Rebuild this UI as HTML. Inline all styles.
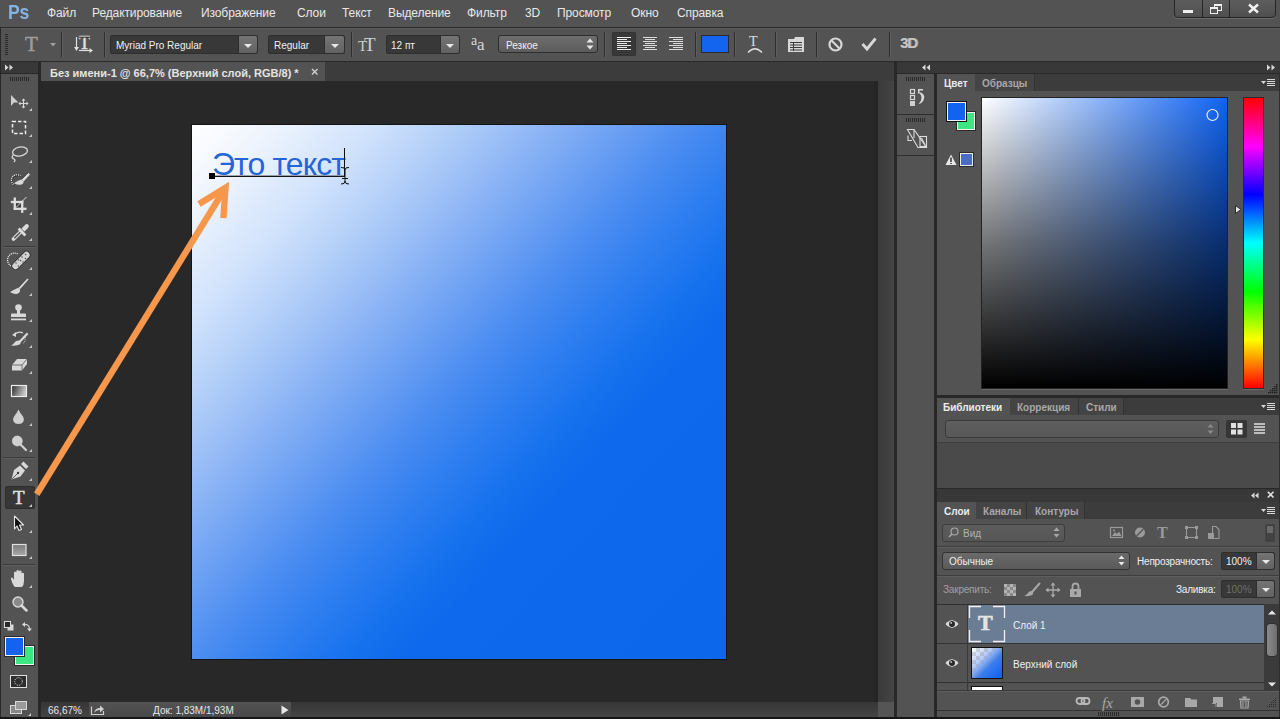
<!DOCTYPE html>
<html><head><meta charset="utf-8">
<style>
*{margin:0;padding:0;box-sizing:border-box}
html,body{width:1280px;height:719px;overflow:hidden;background:#535353;font-family:"Liberation Sans",sans-serif;position:relative}
.a{position:absolute}
.t{position:absolute;white-space:nowrap;color:#e6e6e6;font-size:12px;line-height:14px}
.m{top:6px;font-size:12px;color:#e8e8e8;letter-spacing:-0.1px}
.sep{position:absolute;top:32px;width:1px;height:25px;background:#2e2e2e;box-shadow:1px 0 0 #5e5e5e}
.dd{position:absolute;background:#383838;border:1px solid #2e2e2e;border-radius:2px}
.ddb{position:absolute;top:0;bottom:0;right:0;background:linear-gradient(#747474,#626262);border-left:1px solid #2e2e2e;border-radius:0 2px 2px 0}
.ddb:after{content:"";position:absolute;left:50%;top:50%;margin:-1px 0 0 -4px;border-left:4px solid transparent;border-right:4px solid transparent;border-top:4px solid #e8e8e8}
.tab{position:absolute;font-size:10px;font-weight:bold;line-height:12px;white-space:nowrap}
svg{position:absolute;overflow:visible}
</style></head><body>
<!-- ===== MENU BAR ===== -->
<div class="a" style="left:0;top:0;width:1280px;height:27px;background:#535353"></div>
<div class="a" style="left:0;top:27px;width:1280px;height:1px;background:#2a2a2a"></div>
<div class="t" style="left:8px;top:1px;font-size:21px;line-height:21px;font-weight:bold;color:#86b2e4;letter-spacing:-0.3px;transform:scaleX(.84);transform-origin:0 0">Ps</div>
<div class="t m" style="left:47px">Файл</div>
<div class="t m" style="left:92px">Редактирование</div>
<div class="t m" style="left:201px">Изображение</div>
<div class="t m" style="left:297px">Слои</div>
<div class="t m" style="left:342px">Текст</div>
<div class="t m" style="left:388px">Выделение</div>
<div class="t m" style="left:467px">Фильтр</div>
<div class="t m" style="left:525px">3D</div>
<div class="t m" style="left:557px">Просмотр</div>
<div class="t m" style="left:631px">Окно</div>
<div class="t m" style="left:677px">Справка</div>
<!-- window buttons -->
<div class="a" style="left:1174px;top:-2px;width:102px;height:20px;border:1px solid #262626;border-radius:0 0 4px 4px;background:linear-gradient(#5e5e5e,#4f4f4f);box-shadow:0 1px 0 #6a6a6a"></div>
<div class="a" style="left:1202px;top:0;width:1px;height:17px;background:#262626"></div>
<div class="a" style="left:1229px;top:0;width:1px;height:17px;background:#262626"></div>
<div class="a" style="left:1183px;top:10px;width:10px;height:3px;background:#f0f0f0"></div>
<div class="a" style="left:1214px;top:4px;width:8px;height:7px;border:1.5px solid #f0f0f0;border-top-width:2px"></div>
<div class="a" style="left:1210px;top:7px;width:8px;height:7px;border:1.5px solid #f0f0f0;border-top-width:2px;background:#575757"></div>
<svg style="left:1248px;top:4px" width="11" height="9"><path d="M1 0.5L10 8.5M10 0.5L1 8.5" stroke="#f0f0f0" stroke-width="2.4"/></svg>

<!-- ===== OPTIONS BAR ===== -->
<div class="a" style="left:0;top:28px;width:1280px;height:33px;background:#535353;border-top:1px solid #5c5c5c"></div>
<div class="a" style="left:0;top:61px;width:1280px;height:1px;background:#2a2a2a"></div>
<div class="a" style="left:0;top:28px;width:1px;height:33px;background:#2a2a2a"></div>

<!-- grip -->
<svg style="left:5px;top:34px" width="4" height="21"><g stroke="#2a2a2a" stroke-width="1"><path d="M0 0.5H3M0 2.5H3M0 4.5H3M0 6.5H3M0 8.5H3M0 10.5H3M0 12.5H3M0 14.5H3M0 16.5H3M0 18.5H3M0 20.5H3"/></g></svg>
<!-- T tool preset -->
<div class="t" style="left:25px;top:34px;font-family:'Liberation Serif',serif;font-size:21px;line-height:21px;color:#9c9c9c;-webkit-text-stroke:0.5px #9c9c9c">T</div>
<svg style="left:50px;top:43px" width="6" height="4"><path d="M0 0H6L3 3.5Z" fill="#a0a0a0"/></svg>
<div class="sep" style="left:61px"></div>
<!-- orientation icon -->
<div class="t" style="left:79px;top:34px;font-family:'Liberation Serif',serif;font-size:18px;line-height:18px;color:#e0e0e0;-webkit-text-stroke:0.5px #e0e0e0">T</div>
<svg style="left:74px;top:36px" width="20" height="17"><path d="M2.5 1V13" stroke="#e0e0e0" stroke-width="1.2"/><path d="M0 11L2.5 15L5 11Z" fill="#e0e0e0"/><path d="M5 14.5H17" stroke="#e0e0e0" stroke-width="1.2"/><path d="M15.5 12L19 14.5L15.5 17Z" fill="#e0e0e0"/><path d="M5 1.2H17" stroke="#2a2a2a" stroke-width="1"/></svg>
<div class="sep" style="left:104px"></div>
<!-- font family dropdown -->
<div class="dd" style="left:110px;top:35px;width:148px;height:19px"><div class="ddb" style="width:19px"></div></div>
<div class="t" style="left:116px;top:40px;font-size:10px;line-height:12px;color:#f0f0f0">Myriad Pro Regular</div>
<div class="dd" style="left:268px;top:35px;width:77px;height:19px"><div class="ddb" style="width:20px"></div></div>
<div class="t" style="left:274px;top:40px;font-size:10px;line-height:12px;color:#f0f0f0">Regular</div>
<div class="sep" style="left:351px"></div>
<!-- size icon -->
<div class="t" style="left:358px;top:39px;font-family:'Liberation Serif',serif;font-size:15px;line-height:15px;color:#cfcfcf">T</div>
<div class="t" style="left:364px;top:35px;font-family:'Liberation Serif',serif;font-size:19px;line-height:19px;color:#cfcfcf">T</div>
<div class="dd" style="left:386px;top:35px;width:74px;height:19px"><div class="ddb" style="width:19px"></div></div>
<div class="t" style="left:391px;top:40px;font-size:10px;line-height:12px;color:#f0f0f0">12 пт</div>
<!-- aa icon -->
<div class="t" style="left:471px;top:34px;font-family:'Liberation Serif',serif;font-size:14px;line-height:14px;color:#d8d8d8">a</div>
<div class="t" style="left:477px;top:37px;font-family:'Liberation Serif',serif;font-size:17px;line-height:16px;color:#d8d8d8">a</div>
<!-- antialias dropdown -->
<div class="a" style="left:498px;top:35px;width:100px;height:18px;border:1px solid #2e2e2e;border-radius:3px;background:linear-gradient(#6e6e6e,#5c5c5c)"></div>
<div class="t" style="left:506px;top:40px;font-size:10px;line-height:12px;color:#f0f0f0">Резкое</div>
<svg style="left:586px;top:38px" width="8" height="12"><path d="M0.5 4.5L4 0.5L7.5 4.5ZM0.5 7.5L4 11.5L7.5 7.5Z" fill="#e8e8e8"/></svg>
<div class="sep" style="left:604px"></div>
<!-- align buttons -->
<div class="a" style="left:612px;top:32px;width:24px;height:24px;background:#383838;border-radius:2px;box-shadow:inset 0 0 0 1px #333"></div>
<svg style="left:617px;top:37px" width="15" height="14"><g stroke="#ececec" stroke-width="1"><path d="M0 0.5H14M0 2.5H10M0 4.5H14M0 6.5H10M0 8.5H14M0 10.5H10M0 12.5H14"/></g></svg>
<svg style="left:643px;top:37px" width="15" height="14"><g stroke="#dcdcdc" stroke-width="1"><path d="M0 0.5H14M2 2.5H12M0 4.5H14M2 6.5H12M0 8.5H14M2 10.5H12M0 12.5H14"/></g></svg>
<svg style="left:669px;top:37px" width="15" height="14"><g stroke="#dcdcdc" stroke-width="1"><path d="M0 0.5H14M4 2.5H14M0 4.5H14M4 6.5H14M0 8.5H14M4 10.5H14M0 12.5H14"/></g></svg>
<div class="sep" style="left:695px"></div>
<div class="a" style="left:701px;top:35px;width:28px;height:18px;background:#1464f0;border:1px solid #2a2a2a"></div>
<div class="sep" style="left:734px"></div>
<!-- warp -->
<div class="t" style="left:749px;top:35px;font-family:'Liberation Serif',serif;font-size:14px;line-height:14px;color:#dedede">T</div>
<svg style="left:747px;top:44px" width="16" height="10"><path d="M1 8.5Q8 1 15 8.5" stroke="#dedede" stroke-width="1.4" fill="none"/></svg>
<div class="sep" style="left:775px"></div>
<!-- panels icon -->
<svg style="left:788px;top:36px" width="17" height="17"><path d="M0 3H6L7 1H16V16H0Z" fill="#d8d8d8"/><g stroke="#3a3a3a" stroke-width="1"><path d="M2 6.5H14M2 9H14M2 11.5H14M2 14H14"/><path d="M5.5 6V15"/></g></svg>
<div class="sep" style="left:816px"></div>
<svg style="left:828px;top:37px" width="15" height="15"><circle cx="7.5" cy="7.5" r="6" stroke="#d8d8d8" stroke-width="2.2" fill="none"/><path d="M3.5 3.5L11.5 11.5" stroke="#d8d8d8" stroke-width="2.2"/></svg>
<svg style="left:861px;top:37px" width="16" height="14"><path d="M1.5 7L6 12L14.5 1.5" stroke="#d8d8d8" stroke-width="2.8" fill="none"/></svg>
<div class="sep" style="left:889px"></div>
<div class="t" style="left:900px;top:35px;font-size:15px;line-height:16px;font-weight:bold;color:#c4c4c4;letter-spacing:-1.2px;text-shadow:1px 0 0 #8a8a8a">3D</div>

<!-- ===== ROW BELOW OPTIONS / DOC AREA ===== -->
<div class="a" style="left:0;top:62px;width:1280px;height:657px;background:#282828"></div>
<div class="a" style="left:41px;top:62px;width:853px;height:19px;background:#3c3c3c"></div>
<div class="a" style="left:41px;top:62px;width:284px;height:19px;background:#535353"></div>
<div class="tab" style="left:50px;top:67px;font-size:11px;color:#e4e4e4">Без имени-1 @ 66,7% (Верхний слой, RGB/8) *</div>
<svg style="left:311px;top:68px" width="8" height="8"><path d="M1 1L6.5 6.5M6.5 1L1 6.5" stroke="#d0d0d0" stroke-width="1.4"/></svg>
<!-- pasteboard -->
<div class="a" style="left:41px;top:81px;width:837px;height:621px;background:#282828"></div>
<div class="a" style="left:874px;top:81px;width:4px;height:621px;background:#252525"></div>
<div class="a" style="left:878px;top:81px;width:16px;height:621px;background:linear-gradient(90deg,#3a3a3a,#444)"></div>
<!-- status bar -->
<div class="a" style="left:41px;top:702px;width:837px;height:15px;background:linear-gradient(#363636,#444)"></div>
<div class="a" style="left:89px;top:702px;width:202px;height:15px;background:linear-gradient(#535353,#484848)"></div>
<div class="a" style="left:878px;top:702px;width:16px;height:15px;background:#555"></div>
<div class="t" style="left:48px;top:705px;font-size:10px;line-height:11px;color:#e8e8e8">66,67%</div>
<svg style="left:90px;top:703px" width="16" height="13"><path d="M1.5 3.5V11.5H13.5V8" stroke="#d0d0d0" stroke-width="1.2" fill="none"/><path d="M4 10Q5 5 10 5V2.5L14 6L10 9.5V7Q6 7 4 10Z" fill="#d0d0d0"/></svg>
<div class="t" style="left:153px;top:705px;font-size:10px;line-height:11px;color:#e8e8e8">Док: 1,83M/1,93M</div>
<svg style="left:281px;top:705px" width="8" height="10"><path d="M0.5 0.5L7.5 5L0.5 9.5Z" fill="#e8e8e8"/></svg>
<div class="a" style="left:0;top:717px;width:1280px;height:2px;background:#161616"></div>
<!-- canvas -->
<div class="a" style="left:191px;top:124px;width:536px;height:536px;background:#141414"></div>
<div class="a" style="left:192px;top:125px;width:534px;height:534px;background:linear-gradient(133deg,#ffffff 0%,#eef4fd 8%,#d0e2fc 18%,#b0cdf8 26%,#8cb4f5 34.5%,#6a9ff3 42%,#4a8cf1 49%,#2e7ef0 56%,#1772ee 63%,#0e69ec 69%,#0c67eb 100%)"></div>
<!-- text on canvas -->
<div class="t" style="left:212px;top:146px;font-size:32px;line-height:36px;color:#2565d8;letter-spacing:-0.9px">Это текст</div>
<div class="a" style="left:215px;top:176px;width:130px;height:1px;background:#141414"></div><div class="a" style="left:215px;top:175px;width:130px;height:1px;background:rgba(20,20,20,.35)"></div>
<div class="a" style="left:209px;top:173px;width:6px;height:6px;background:#000"></div>
<div class="a" style="left:344px;top:148px;width:1px;height:28px;background:#111"></div>
<svg style="left:340px;top:166px" width="10" height="20"><g stroke="#111" stroke-width="1" fill="none"><path d="M1 1.5Q5 1 5 4Q5 1 9 1.5"/><path d="M5 4V15"/><path d="M2 12.5H8"/><path d="M1 18Q5 18.5 5 15Q5 18.5 9 18"/></g></svg>


<!-- ===== TOOLBOX ===== -->
<div class="a" style="left:1px;top:62px;width:37px;height:11px;background:#383838"></div>
<svg style="left:5px;top:64px" width="10" height="7"><path d="M0 0.5L3.5 3.5L0 6.5ZM4.5 0.5L8 3.5L4.5 6.5Z" fill="#d8d8d8"/></svg>
<div class="a" style="left:1px;top:74px;width:37px;height:643px;background:#535353"></div>
<svg style="left:0;top:0" width="40" height="719">
<g stroke="#2a2a2a" stroke-width="1"><path d="M10.5 77V81M12.5 77V81M14.5 77V81M16.5 77V81M18.5 77V81M20.5 77V81M22.5 77V81M24.5 77V81M26.5 77V81M28.5 77V81"/></g>
<g fill="#c8c8c8">
<path d="M29 111L32 108V111Z"/><path d="M29 137L32 134V137Z"/><path d="M29 163L32 160V163Z"/><path d="M29 189L32 186V189Z"/><path d="M29 215L32 212V215Z"/><path d="M29 241L32 238V241Z"/>
<path d="M29 270L32 267V270Z"/><path d="M29 296L32 293V296Z"/><path d="M29 322L32 319V322Z"/><path d="M29 348L32 345V348Z"/><path d="M29 374L32 371V374Z"/><path d="M29 400L32 397V400Z"/><path d="M29 426L32 423V426Z"/><path d="M29 452L32 449V452Z"/>
<path d="M29 481L32 478V481Z"/><path d="M29 507L32 504V507Z"/><path d="M29 533L32 530V533Z"/><path d="M29 559L32 556V559Z"/><path d="M29 588L32 585V588Z"/>
<path d="M28 716L31 713V716Z"/>
</g>
<!-- separators -->
<g stroke="#3a3a3a" stroke-width="1"><path d="M3 246.5H35M3 457.5H35M3 564.5H35"/></g>
<g stroke="#5e5e5e" stroke-width="1"><path d="M3 247.5H35M3 458.5H35M3 565.5H35"/></g>
<!-- move -->
<path d="M11 95L18.5 102.5H14L11 106Z" fill="#cfcfcf"/>
<g stroke="#d8d8d8" stroke-width="1.2" fill="none"><path d="M23.5 99V108M19 103.5H28"/></g>
<g fill="#d8d8d8"><path d="M21.5 100.5L23.5 98.5L25.5 100.5ZM21.5 106.5L23.5 108.5L25.5 106.5ZM20.5 101.5L18.5 103.5L20.5 105.5ZM26.5 101.5L28.5 103.5L26.5 105.5Z"/></g>
<!-- marquee -->
<rect x="12.5" y="121.5" width="13" height="12" fill="none" stroke="#ececec" stroke-width="1.5" stroke-dasharray="3.5 2"/>
<!-- lasso -->
<ellipse cx="20" cy="151.5" rx="7.5" ry="4.5" transform="rotate(-12 20 151.5)" fill="none" stroke="#d8d8d8" stroke-width="1.3"/>
<path d="M13 155Q11 158 14 159Q16 160 14 162" fill="none" stroke="#d8d8d8" stroke-width="1.3"/>
<!-- quick selection -->
<path d="M13.5 184.5A5.5 5.5 0 1 1 20.5 176" fill="none" stroke="#1e1e1e" stroke-width="1.6" stroke-dasharray="1.2 0.8" transform="translate(0.6 0.6)"/>
<path d="M13.5 184.5A5.5 5.5 0 1 1 20.5 176" fill="none" stroke="#f0f0f0" stroke-width="1.2" stroke-dasharray="1.1 0.9"/>
<path d="M28 172.8L30 174.6L23.6 181.4L21.4 179.4Z" fill="#dcdcdc"/>
<path d="M28 172.8L21.4 179.4" stroke="#1e1e1e" stroke-width="0.8"/>
<path d="M21.4 179.4Q17.5 180.5 14 183.3Q18 185.5 21.5 184.6Q24 183.5 23.6 181.4Z" fill="#d8d8d8"/>
<!-- crop -->
<rect x="15.5" y="203" width="6" height="5.5" fill="#3c3c3c"/>
<g stroke="#dedede" stroke-width="2.3" fill="none"><path d="M10.8 202H23.3"/><path d="M14.8 197.5V210"/><path d="M13.7 208.8H26.5"/><path d="M22.2 200.8V212.8"/></g>
<path d="M16 207.5L26.5 197" stroke="#e8e8e8" stroke-width="0.9"/>
<!-- eyedropper -->
<path d="M13.5 239L21 231.5" stroke="#dcdcdc" stroke-width="3.8" stroke-linecap="round"/>
<path d="M14.3 238.2L20.5 232" stroke="#4a4a4a" stroke-width="1.3"/>
<path d="M18.6 228.6L25.4 235.4" stroke="#dcdcdc" stroke-width="2.8"/>
<path d="M21.5 228.5L25 225Q26.8 223.3 28.3 224.8Q29.8 226.3 28 228L24.5 231.5Z" fill="#dcdcdc"/>
<!-- healing -->
<path d="M11 266A6 6 0 0 1 18 254" fill="none" stroke="#f0f0f0" stroke-width="1.2" stroke-dasharray="1.1 0.9"/>
<path d="M15.5 266L26.5 255" stroke="#2a2a2a" stroke-width="8" stroke-linecap="round"/>
<path d="M15.5 266L26.5 255" stroke="#d2d2d2" stroke-width="6.4" stroke-linecap="round"/>
<g fill="#5a5a5a"><circle cx="16" cy="263" r="0.8"/><circle cx="18.5" cy="266" r="0.8"/><circle cx="20.5" cy="260.5" r="0.8"/><circle cx="23" cy="262" r="0.8"/><circle cx="22" cy="257" r="0.8"/><circle cx="25.5" cy="258.5" r="0.8"/><circle cx="25.5" cy="254.5" r="0.8"/><circle cx="18.5" cy="260" r="0.8"/></g>
<!-- brush -->
<path d="M27 278.3L28.6 279.6L20 289.3L18.2 287.7Z" fill="#d8d8d8"/>
<path d="M27 278.3L18.2 287.7" stroke="#1e1e1e" stroke-width="0.7"/>
<path d="M18.2 287.7Q14 289.5 10 292Q14 294.5 17.5 293.7Q20.5 292.5 20 289.3Z" fill="#d8d8d8"/>
<!-- stamp -->
<circle cx="18.5" cy="307.5" r="3.3" fill="#d8d8d8"/>
<path d="M17 309H20V313.5H25Q26 313.5 26 314.5V317H11V314.5Q11 313.5 12 313.5H17Z" fill="#d8d8d8"/>
<rect x="11" y="318.5" width="15" height="1.8" fill="#d8d8d8"/>
<!-- history brush -->
<path d="M27 334L19.5 342" stroke="#d8d8d8" stroke-width="2.2" stroke-linecap="round"/>
<path d="M20 340.5Q21.5 343 19.5 344.5Q17 346 11 345.5Q14 344 14.5 342.5Q16 340 20 340.5Z" fill="#d8d8d8"/>
<path d="M15 334Q19 331 23 333" fill="none" stroke="#d8d8d8" stroke-width="1.3"/>
<path d="M12 335L16 332V337Z" fill="#d8d8d8"/>
<path d="M25 337Q26 342 22 344" fill="none" stroke="#e0e0e0" stroke-width="1" stroke-dasharray="1 1"/>
<!-- eraser -->
<path d="M12 365L17 359H27V364L22 370.5H12Z" fill="#d8d8d8"/>
<path d="M12 365H22L27 359M22 365V370.5" fill="none" stroke="#535353" stroke-width="0.8"/>
<!-- gradient -->
<rect x="11.5" y="385.5" width="15" height="11" fill="url(#gtool)" stroke="#ececec" stroke-width="1.2"/>
<defs><linearGradient id="gtool" x1="0" x2="1" y1="0" y2="0.3"><stop offset="0" stop-color="#2a2a2a"/><stop offset="1" stop-color="#c8c8c8"/></linearGradient></defs>
<!-- blur drop -->
<path d="M18.5 409.5Q20 413 23 416.5Q24.5 419 23.5 421.5Q22 424 18.5 424Q15 424 13.5 421.5Q12.5 419 14 416.5Q17 413 18.5 409.5Z" fill="#d0d0d0"/>
<!-- dodge -->
<circle cx="17.3" cy="441" r="5" fill="#d0d0d0" stroke="#e0e0e0" stroke-width="0.6"/>
<path d="M20.5 444.5L26 450" stroke="#d0d0d0" stroke-width="2.2" stroke-linecap="round"/>
<!-- pen -->
<path d="M11.5 479.5L14 470L20 465.5L25 470.5L20.5 476.5Z" fill="#d8d8d8"/>
<path d="M21 464L23.5 461.5L28.5 466.5L26 469Z" fill="#d8d8d8"/>
<path d="M12 479L17.5 473.5" stroke="#535353" stroke-width="0.9"/><circle cx="18" cy="473" r="1.2" fill="#3a3a3a"/>
</g>
</svg>
<!-- type tool selected -->
<div class="a" style="left:5px;top:486px;width:30px;height:23px;background:#363636;border-radius:3px;box-shadow:inset 0 0 0 1px #2e2e2e"></div>
<div class="t" style="left:13px;top:488px;font-family:'Liberation Serif',serif;font-size:19px;line-height:19px;color:#e0e0e0;-webkit-text-stroke:0.5px #e0e0e0">T</div>
<svg style="left:0;top:0" width="40" height="719">
<path d="M29 507L32 504V507Z" fill="#c8c8c8"/>
<!-- path selection -->
<path d="M14.5 516L23.5 525H19.5L21.5 529.5L19 530.5L17 526L14.5 529Z" fill="#111" stroke="#e8e8e8" stroke-width="1.1" stroke-linejoin="round"/>
<!-- rectangle -->
<rect x="12.5" y="544.5" width="13.5" height="11" fill="url(#rtool)" stroke="#e0e0e0" stroke-width="1.2"/>
<defs><linearGradient id="rtool" x1="0" x2="0" y1="0" y2="1"><stop offset="0" stop-color="#7a7a7a"/><stop offset="1" stop-color="#a8a8a8"/></linearGradient></defs>
<!-- hand -->
<path d="M14 586Q12 583 11 579Q10.5 577.5 12 577.5Q13 577.5 14 580V573Q14 571.5 15.2 571.5Q16.3 571.5 16.3 573V578V571.5Q16.3 570 17.6 570Q19 570 19 571.5V578V572Q19 570.6 20.3 570.6Q21.6 570.6 21.6 572V578V574Q21.6 572.8 22.8 572.8Q24 572.8 24 574V581Q24 585 22 587H15Z" fill="#d8d8d8"/>
<!-- zoom -->
<circle cx="18" cy="602" r="5" fill="#8a8a8a" stroke="#d8d8d8" stroke-width="1.4"/>
<path d="M21.5 605.5L26.5 610.5" stroke="#d8d8d8" stroke-width="2.5" stroke-linecap="round"/>
<!-- default colors -->
<rect x="7.5" y="624.5" width="6" height="6" fill="#d8d8d8"/>
<rect x="4.5" y="621.5" width="6" height="6" fill="#2a2a2a" stroke="#d8d8d8" stroke-width="1"/>
<!-- swap -->
<path d="M23.5 624.5Q29.5 624 29.5 629" fill="none" stroke="#d8d8d8" stroke-width="1.2"/>
<path d="M22 624.5L25 622V627Z" fill="#d8d8d8"/><path d="M27 628.5H32L29.5 631.5Z" fill="#d8d8d8"/>
</svg>
<!-- fg/bg -->
<div class="a" style="left:15px;top:646px;width:19px;height:19px;background:#3ee682;border:1px solid #f4f4f4;box-shadow:0 0 0 1px #2a2a2a"></div>
<div class="a" style="left:5px;top:637px;width:19px;height:19px;background:#1462f0;border:1px solid #f4f4f4;box-shadow:0 0 0 1px #2a2a2a"></div>
<!-- quick mask -->
<div class="a" style="left:10px;top:675px;width:17px;height:13px;border:1px solid #e0e0e0;background:#2e2e2e"></div>
<svg style="left:13px;top:676px" width="11" height="11"><circle cx="5.5" cy="5.5" r="3.8" fill="none" stroke="#e8e8e8" stroke-width="1" stroke-dasharray="1 1.2"/></svg>
<!-- screen mode -->
<div class="a" style="left:10px;top:705px;width:12px;height:9px;border:1px solid #d8d8d8;background:#888"></div>
<div class="a" style="left:15px;top:701px;width:12px;height:9px;border:1px solid #d8d8d8;background:#9a9a9a"></div>

<!-- ===== RIGHT DOCK ===== -->
<div class="a" style="left:897px;top:62px;width:383px;height:11px;background:#383838"></div>
<svg style="left:922px;top:64px" width="10" height="7"><path d="M3.5 0.5L0 3.5L3.5 6.5ZM8 0.5L4.5 3.5L8 6.5Z" fill="#d8d8d8"/></svg>
<svg style="left:1267px;top:64px" width="10" height="7"><path d="M0 0.5L3.5 3.5L0 6.5ZM4.5 0.5L8 3.5L4.5 6.5Z" fill="#d8d8d8"/></svg>
<!-- icon column -->
<div class="a" style="left:897px;top:74px;width:37px;height:643px;background:#535353"></div>
<div class="a" style="left:897px;top:114px;width:37px;height:1px;background:#2e2e2e"></div>
<div class="a" style="left:897px;top:155px;width:37px;height:1px;background:#2e2e2e"></div>
<svg style="left:897px;top:74px" width="37" height="90">
<g stroke="#2a2a2a" stroke-width="1"><path d="M9.5 3V7M11.5 3V7M13.5 3V7M15.5 3V7M17.5 3V7M19.5 3V7M21.5 3V7M23.5 3V7M25.5 3V7M27.5 3V7"/><path d="M9.5 44V48M11.5 44V48M13.5 44V48M15.5 44V48M17.5 44V48M19.5 44V48M21.5 44V48M23.5 44V48M25.5 44V48M27.5 44V48"/></g>
<g fill="none" stroke="#d8d8d8" stroke-width="1.2"><rect x="13.5" y="15.5" width="4" height="4"/><rect x="13.5" y="21.5" width="4" height="4"/></g>
<rect x="13" y="27" width="5" height="5" fill="#cfcfcf"/>
<path d="M21 15H26V16.5H22.5V19.5H21Z" fill="#d8d8d8"/>
<path d="M22.5 18Q28.5 20 27 25Q25.5 29.5 21.5 30Q24.5 27 24.5 24Q24.5 20.5 22.5 19.5Z" fill="#d8d8d8"/>
<g fill="none" stroke="#dcdcdc" stroke-width="1.1"><path d="M10.5 55.5H17L29.5 73.5H21Z"/><path d="M11 61.5V66.5H15"/><path d="M17 55.5V64"/><rect x="23" y="62.5" width="6.5" height="10"/><path d="M24.5 64L28 71"/></g>
</svg>
<!-- ===== COLOR PANEL ===== -->
<div class="a" style="left:937px;top:74px;width:343px;height:17px;background:#3c3c3c"></div>
<div class="a" style="left:975px;top:74px;width:60px;height:17px;background:#444;border-right:1px solid #333"></div>
<div class="a" style="left:937px;top:74px;width:38px;height:17px;background:#535353"></div>
<div class="tab" style="left:944px;top:78px;color:#ececec">Цвет</div>
<div class="tab" style="left:982px;top:78px;color:#a8a8a8">Образцы</div>
<svg style="left:1261px;top:79px" width="15" height="8"><path d="M0 2H5L2.5 5Z" fill="#d8d8d8"/><g stroke="#d8d8d8" stroke-width="1"><path d="M6 0.5H14M6 2.5H14M6 4.5H14M6 6.5H14"/></g></svg>
<div class="a" style="left:937px;top:91px;width:342px;height:304px;background:#535353"></div>
<!-- fg/bg in panel -->
<div class="a" style="left:957px;top:112px;width:18px;height:18px;background:#3ee682;border:1px solid #f4f4f4;box-shadow:0 0 0 1px #2a2a2a"></div>
<div class="a" style="left:947px;top:102px;width:19px;height:19px;background:#1462f0;border:1.5px solid #f4f4f4;box-shadow:0 0 0 1px #111"></div>
<svg style="left:945px;top:154px" width="12" height="12"><path d="M6 0.5L11.5 11H0.5Z" fill="#e8e8e8"/><path d="M6 3.5V8M6 9V10" stroke="#333" stroke-width="1.5"/></svg>
<div class="a" style="left:960px;top:153px;width:13px;height:13px;background:#4a6cc4;border:1px solid #ececec;box-shadow:0 0 0 1px #2a2a2a"></div>
<!-- color field -->
<div class="a" style="left:981px;top:97px;width:247px;height:292px;background:#222"></div><div class="a" style="left:981px;top:389px;width:247px;height:1px;background:#6a6a6a"></div>
<div class="a" style="left:982px;top:98px;width:245px;height:290px;background:linear-gradient(to bottom,rgba(0,0,0,0) 0%,rgba(0,0,0,.54) 50%,#000 100%),linear-gradient(to right,#fff,#0f62f2)"></div>
<svg style="left:1205px;top:108px" width="15" height="15"><circle cx="7.5" cy="7" r="5.5" fill="none" stroke="#f0f0f0" stroke-width="1.2"/></svg>
<!-- hue bar -->
<div class="a" style="left:1243px;top:97px;width:21px;height:292px;background:#2a2a2a"></div><div class="a" style="left:1243px;top:389px;width:21px;height:1px;background:#6a6a6a"></div>
<div class="a" style="left:1244px;top:98px;width:19px;height:290px;background:linear-gradient(to bottom,#ff0000 0%,#ff00ff 16.7%,#0000ff 33.3%,#00ffff 50%,#00ff00 66.7%,#ffff00 83.3%,#ff0000 100%)"></div>
<svg style="left:1234px;top:204px" width="9" height="11"><path d="M1.5 1.5L7 5.5L1.5 9.5Z" fill="#e4e4e4" stroke="#2a2a2a" stroke-width="1" stroke-linejoin="round"/></svg>
<svg style="left:1268px;top:384px" width="10" height="10"><g fill="#1e1e1e"><rect x="8" y="0" width="1.4" height="1.4"/><rect x="8" y="2" width="1.4" height="1.4"/><rect x="6" y="2" width="1.4" height="1.4"/><rect x="8" y="4" width="1.4" height="1.4"/><rect x="6" y="4" width="1.4" height="1.4"/><rect x="4" y="4" width="1.4" height="1.4"/><rect x="8" y="6" width="1.4" height="1.4"/><rect x="6" y="6" width="1.4" height="1.4"/><rect x="4" y="6" width="1.4" height="1.4"/><rect x="2" y="6" width="1.4" height="1.4"/><rect x="8" y="8" width="1.4" height="1.4"/><rect x="6" y="8" width="1.4" height="1.4"/><rect x="4" y="8" width="1.4" height="1.4"/><rect x="2" y="8" width="1.4" height="1.4"/><rect x="0" y="8" width="1.4" height="1.4"/></g></svg>
<!-- ===== LIBRARIES PANEL ===== -->
<div class="a" style="left:937px;top:398px;width:343px;height:17px;background:#3c3c3c"></div>
<div class="a" style="left:1010px;top:398px;width:69px;height:17px;background:#444;border-right:1px solid #333"></div>
<div class="a" style="left:1079px;top:398px;width:45px;height:17px;background:#444;border-right:1px solid #333"></div>
<div class="a" style="left:937px;top:398px;width:73px;height:17px;background:#535353"></div>
<div class="tab" style="left:943px;top:402px;color:#ececec">Библиотеки</div>
<div class="tab" style="left:1017px;top:402px;color:#a8a8a8">Коррекция</div>
<div class="tab" style="left:1086px;top:402px;color:#a8a8a8">Стили</div>
<svg style="left:1261px;top:403px" width="15" height="8"><path d="M0 2H5L2.5 5Z" fill="#d8d8d8"/><g stroke="#d8d8d8" stroke-width="1"><path d="M6 0.5H14M6 2.5H14M6 4.5H14M6 6.5H14"/></g></svg>
<div class="a" style="left:937px;top:415px;width:342px;height:27px;background:#535353"></div>
<div class="a" style="left:945px;top:420px;width:274px;height:18px;background:linear-gradient(#5e5e5e,#585858);border:1px solid #3a3a3a;border-radius:3px"></div>
<svg style="left:1207px;top:423px" width="7" height="12"><path d="M0.5 4.5L3.5 1L6.5 4.5ZM0.5 7.5L3.5 11L6.5 7.5Z" fill="#8a8a8a"/></svg>
<div class="a" style="left:1226px;top:420px;width:21px;height:18px;background:#363636;border-radius:2px"></div>
<svg style="left:1231px;top:423px" width="12" height="12"><g fill="#e0e0e0"><rect x="0" y="0" width="5" height="5"/><rect x="6.5" y="0" width="5" height="5"/><rect x="0" y="6.5" width="5" height="5"/><rect x="6.5" y="6.5" width="5" height="5"/></g></svg>
<svg style="left:1254px;top:423px" width="12" height="12"><g stroke="#e0e0e0" stroke-width="1.5"><path d="M0 1H11M0 4H11M0 7H11M0 10H11"/></g></svg>
<div class="a" style="left:937px;top:442px;width:342px;height:46px;background:#4a4a4a;border-top:1px solid #3e3e3e"></div>

<!-- ===== LAYERS PANEL ===== -->
<div class="a" style="left:937px;top:489px;width:343px;height:13px;background:#383838"></div>
<svg style="left:1251px;top:492px" width="8" height="7"><path d="M3.5 0.5L0 3.5L3.5 6.5ZM7.5 0.5L4 3.5L7.5 6.5Z" fill="#d8d8d8"/></svg>
<svg style="left:1267px;top:491px" width="8" height="8"><path d="M0.8 0.8L6.5 6.5M6.5 0.8L0.8 6.5" stroke="#e0e0e0" stroke-width="1.6"/></svg>
<div class="a" style="left:937px;top:502px;width:343px;height:17px;background:#3c3c3c"></div>
<div class="a" style="left:976px;top:502px;width:51px;height:17px;background:#444;border-right:1px solid #333"></div>
<div class="a" style="left:1027px;top:502px;width:58px;height:17px;background:#444;border-right:1px solid #333"></div>
<div class="a" style="left:937px;top:502px;width:39px;height:17px;background:#535353"></div>
<div class="tab" style="left:944px;top:506px;color:#ececec">Слои</div>
<div class="tab" style="left:983px;top:506px;color:#a8a8a8">Каналы</div>
<div class="tab" style="left:1035px;top:506px;color:#a8a8a8">Контуры</div>
<svg style="left:1261px;top:507px" width="15" height="8"><path d="M0 2H5L2.5 5Z" fill="#d8d8d8"/><g stroke="#d8d8d8" stroke-width="1"><path d="M6 0.5H14M6 2.5H14M6 4.5H14M6 6.5H14"/></g></svg>
<div class="a" style="left:937px;top:519px;width:342px;height:198px;background:#535353"></div>
<!-- filter row -->
<div class="a" style="left:942px;top:524px;width:123px;height:18px;background:linear-gradient(#5c5c5c,#565656);border:1px solid #3e3e3e;border-radius:3px"></div>
<svg style="left:948px;top:527px" width="11" height="11"><circle cx="6.5" cy="4.5" r="3.5" fill="none" stroke="#a8a8a8" stroke-width="1.2"/><path d="M4 7L1 10" stroke="#a8a8a8" stroke-width="1.6"/></svg>
<div class="t" style="left:963px;top:528px;font-size:10px;line-height:12px;color:#b0b0b0">Вид</div>
<svg style="left:1053px;top:527px" width="7" height="11"><path d="M0.5 4L3.5 0.5L6.5 4ZM0.5 7L3.5 10.5L6.5 7Z" fill="#a8a8a8"/></svg>
<svg style="left:1108px;top:524px" width="172" height="18">
<g fill="none" stroke="#9a9a9a" stroke-width="1.2"><rect x="2.5" y="3.5" width="12" height="10"/></g>
<path d="M4 12L7 8L9 10L11 7.5L13.5 12Z" fill="#9a9a9a"/><circle cx="6" cy="6.5" r="1" fill="#9a9a9a"/>
<circle cx="32" cy="8.5" r="5" fill="#9a9a9a"/><path d="M28.5 12L35.5 5" stroke="#535353" stroke-width="1.2"/>
<g fill="none" stroke="#9a9a9a" stroke-width="1.1"><rect x="78.5" y="3.5" width="10" height="10"/></g>
<g fill="#9a9a9a"><rect x="77" y="2" width="3" height="3"/><rect x="87" y="2" width="3" height="3"/><rect x="77" y="12" width="3" height="3"/><rect x="87" y="12" width="3" height="3"/></g>
<path d="M104.5 2.5H108L111 5.5V14.5H104.5Z" fill="none" stroke="#9a9a9a" stroke-width="1.1"/>
<rect x="100" y="9" width="6" height="6" fill="#9a9a9a"/>
<rect x="158" y="1" width="8" height="16" fill="#434343" stroke="#3a3a3a"/><rect x="159" y="2" width="6" height="7" fill="#6a6a6a"/>
</svg>
<div class="t" style="left:1157px;top:525px;font-family:'Liberation Serif',serif;font-size:16px;line-height:16px;color:#9a9a9a;font-weight:bold">T</div>
<div class="a" style="left:937px;top:546px;width:342px;height:1px;background:#3e3e3e;box-shadow:0 1px 0 #5e5e5e"></div>
<!-- blend row -->
<div class="a" style="left:942px;top:552px;width:188px;height:18px;background:linear-gradient(#6a6a6a,#5a5a5a);border:1px solid #333;border-radius:3px"></div>
<div class="t" style="left:949px;top:556px;font-size:10px;line-height:12px;color:#f0f0f0">Обычные</div>
<svg style="left:1118px;top:555px" width="7" height="11"><path d="M0.5 4L3.5 0.5L6.5 4ZM0.5 7L3.5 10.5L6.5 7Z" fill="#e8e8e8"/></svg>
<div class="t" style="left:1137px;top:556px;font-size:10px;line-height:12px;color:#f0f0f0;letter-spacing:-0.2px">Непрозрачность:</div>
<div class="dd" style="left:1221px;top:552px;width:54px;height:18px"><div class="ddb" style="width:18px"></div></div>
<div class="t" style="left:1226px;top:556px;font-size:10px;line-height:12px;color:#f0f0f0">100%</div>
<div class="a" style="left:937px;top:575px;width:342px;height:1px;background:#3e3e3e;box-shadow:0 1px 0 #5e5e5e"></div>
<!-- lock row -->
<div class="t" style="left:943px;top:584px;font-size:10px;line-height:12px;color:#a0a0a0;letter-spacing:-0.2px">Закрепить:</div>
<svg style="left:1003px;top:582px" width="80" height="16">
<g fill="#8a8a8a"><rect x="1" y="2" width="12" height="12"/></g>
<g fill="#b4b4b4"><rect x="1" y="2" width="3" height="3"/><rect x="7" y="2" width="3" height="3"/><rect x="4" y="5" width="3" height="3"/><rect x="10" y="5" width="3" height="3"/><rect x="1" y="8" width="3" height="3"/><rect x="7" y="8" width="3" height="3"/><rect x="4" y="11" width="3" height="3"/><rect x="10" y="11" width="3" height="3"/></g>
<path d="M36.5 1.5L29 10" stroke="#a8a8a8" stroke-width="2" stroke-linecap="round"/>
<path d="M29.5 9Q31 11.5 29 13Q26.5 14.5 21.5 14Q24 12.5 25 11Q26 8.5 29.5 9Z" fill="#a8a8a8"/>
<g stroke="#a8a8a8" stroke-width="1.3" fill="none"><path d="M50 1V15M43 8H57"/></g>
<g fill="#a8a8a8"><path d="M47.5 3.5L50 0.5L52.5 3.5ZM47.5 12.5L50 15.5L52.5 12.5ZM45.5 5.5L42.5 8L45.5 10.5ZM54.5 5.5L57.5 8L54.5 10.5Z"/></g>
<path d="M69.5 7V4.5Q69.5 1.5 72.5 1.5Q75.5 1.5 75.5 4.5V7" fill="none" stroke="#a8a8a8" stroke-width="1.8"/>
<rect x="67" y="7" width="11" height="8" fill="#a8a8a8"/><rect x="71.5" y="9.5" width="2" height="3" fill="#535353"/>
</svg>
<div class="t" style="left:1176px;top:584px;font-size:10px;line-height:12px;color:#f0f0f0;letter-spacing:-0.2px">Заливка:</div>
<div class="dd" style="left:1221px;top:580px;width:54px;height:18px"><div class="ddb" style="width:18px"></div></div>
<div class="t" style="left:1226px;top:584px;font-size:10px;line-height:12px;color:#6e6e6e">100%</div>
<!-- layers list -->
<div class="a" style="left:937px;top:604px;width:327px;height:1px;background:#2e2e2e"></div>
<div class="a" style="left:968px;top:605px;width:296px;height:38px;background:#6b7d95"></div>
<div class="a" style="left:937px;top:643px;width:327px;height:1px;background:#333"></div>
<div class="a" style="left:937px;top:682px;width:327px;height:1px;background:#333"></div>
<div class="a" style="left:937px;top:690px;width:327px;height:1px;background:#333"></div>
<div class="a" style="left:967px;top:605px;width:1px;height:86px;background:#3a3a3a"></div>
<svg style="left:945px;top:619px" width="14" height="10"><path d="M0.5 5Q7 -2.5 13.5 5Q7 12.5 0.5 5Z" fill="#dcdcdc"/><circle cx="7" cy="5" r="3" fill="#2a2a2a"/><circle cx="6.2" cy="4" r="1" fill="#bcbcbc"/></svg>
<svg style="left:945px;top:658px" width="14" height="10"><path d="M0.5 5Q7 -2.5 13.5 5Q7 12.5 0.5 5Z" fill="#dcdcdc"/><circle cx="7" cy="5" r="3" fill="#2a2a2a"/><circle cx="6.2" cy="4" r="1" fill="#bcbcbc"/></svg>
<svg style="left:969px;top:606px" width="36" height="36"><g fill="none" stroke="#f0f0f0" stroke-width="1.3"><path d="M0.5 12V0.5H12M24 0.5H35.5V12M35.5 24V35.5H24M12 35.5H0.5V24"/></g></svg>
<div class="t" style="left:978px;top:612px;font-family:'Liberation Serif',serif;font-size:22px;line-height:22px;color:#e4e4e4;font-weight:bold;-webkit-text-stroke:0.6px #e4e4e4">T</div>
<div class="t" style="left:1013px;top:620px;font-size:10px;line-height:12px;color:#f0f0f0">Слой 1</div>
<div class="a" style="left:971px;top:647px;width:32px;height:32px;border:1px solid #111;background:linear-gradient(135deg,#ffffff 0%,#b0c8f8 35%,#3a7cf0 60%,#0c60f0 100%)"></div>
<div class="a" style="left:972px;top:648px;width:30px;height:30px;background-image:linear-gradient(45deg,rgba(150,150,150,.35) 25%,transparent 25%,transparent 75%,rgba(150,150,150,.35) 75%),linear-gradient(45deg,rgba(150,150,150,.35) 25%,transparent 25%,transparent 75%,rgba(150,150,150,.35) 75%);background-size:8px 8px;background-position:0 0,4px 4px;-webkit-mask-image:linear-gradient(135deg,#000 30%,transparent 70%)"></div>
<div class="t" style="left:1013px;top:659px;font-size:10px;line-height:12px;color:#f0f0f0">Верхний слой</div>
<div class="a" style="left:971px;top:686px;width:32px;height:6px;border:1px solid #111;border-bottom:none;background:#fff"></div>
<div class="a" style="left:937px;top:690px;width:327px;height:1px;background:#3a3a3a"></div>
<!-- scrollbar -->
<div class="a" style="left:1264px;top:604px;width:15px;height:87px;background:#3b3b3b"></div>
<svg style="left:1268px;top:610px" width="8" height="5"><path d="M0 4.5L4 0.5L8 4.5Z" fill="#e8e8e8"/></svg>
<div class="a" style="left:1266px;top:623px;width:12px;height:34px;border-radius:4px;background:linear-gradient(90deg,#8a8a8a,#6e6e6e);border:1px solid #2e2e2e"></div>
<svg style="left:1268px;top:682px" width="8" height="5"><path d="M0 0.5L4 4.5L8 0.5Z" fill="#e8e8e8"/></svg>
<!-- bottom bar -->
<div class="a" style="left:937px;top:691px;width:342px;height:19px;background:#535353;border-top:1px solid #5e5e5e"></div>
<div class="a" style="left:937px;top:710px;width:342px;height:1px;background:#333"></div>
<div class="a" style="left:937px;top:711px;width:342px;height:6px;background:#535353"></div>
<svg style="left:1074px;top:695px" width="206" height="22">
<g fill="none" stroke="#b8b8b8" stroke-width="1.8"><rect x="2.5" y="3" width="8" height="6" rx="3"/><rect x="7.5" y="3" width="8" height="6" rx="3"/></g>
<path d="M3 8H13" stroke="#535353" stroke-width="0"/>
<g fill="#a8a8a8"><rect x="57" y="2" width="13" height="10"/></g><circle cx="63.5" cy="7" r="2.8" fill="#535353"/>
<circle cx="89.5" cy="7" r="4.8" fill="none" stroke="#a8a8a8" stroke-width="1.8"/><path d="M86.5 10L92.5 4" stroke="#a8a8a8" stroke-width="1.3"/>
<path d="M111 3H116L117.5 4.5H123V12H111Z" fill="#a8a8a8"/>
<path d="M139 2H149V12H143V8H139Z" fill="#a8a8a8"/><path d="M138 8.5H142V12" fill="none" stroke="#a8a8a8" stroke-width="0.9"/>
<g fill="#a8a8a8"><rect x="165" y="3.5" width="11" height="1.5"/><rect x="168.5" y="1.5" width="4" height="2"/></g>
<path d="M166.5 6H174.5L174 13H167Z" fill="none" stroke="#a8a8a8" stroke-width="1.2"/><path d="M169 7V12M172 7V12" stroke="#a8a8a8" stroke-width="1"/>
<g fill="#2a2a2a"><rect x="201" y="3" width="1" height="1"/><rect x="199" y="5" width="1" height="1"/><rect x="201" y="5" width="1" height="1"/><rect x="197" y="7" width="1" height="1"/><rect x="199" y="7" width="1" height="1"/><rect x="201" y="7" width="1" height="1"/><rect x="195" y="9" width="1" height="1"/><rect x="197" y="9" width="1" height="1"/><rect x="199" y="9" width="1" height="1"/><rect x="201" y="9" width="1" height="1"/><rect x="193" y="11" width="1" height="1"/><rect x="195" y="11" width="1" height="1"/><rect x="197" y="11" width="1" height="1"/><rect x="199" y="11" width="1" height="1"/><rect x="201" y="11" width="1" height="1"/></g>
<g stroke="#2a2a2a" stroke-width="1"><path d="M24.5 17V21M26.5 17V21M28.5 17V21M30.5 17V21M32.5 17V21M34.5 17V21M36.5 17V21M38.5 17V21M40.5 17V21M42.5 17V21M44.5 17V21"/></g>
</svg>
<div class="t" style="left:1102px;top:696px;font-family:'Liberation Serif',serif;font-style:italic;font-size:15px;line-height:15px;color:#a8a8a8">fx</div>
<div class="a" style="left:1279px;top:74px;width:1px;height:643px;background:#2e2e2e"></div>
<!--END5-->
<!--END4-->
<!--END3-->
<!--END2-->
<!--END-->
<!-- arrow -->
<svg style="left:0;top:0" width="400" height="520"><g stroke="#f7974b" stroke-width="6.4" fill="none" stroke-linecap="butt" stroke-miterlimit="10"><path d="M36.7 494.2L225 188.5"/><path d="M199 204L225.5 187.7L223.4 218.1"/></g></svg>
</body></html>
